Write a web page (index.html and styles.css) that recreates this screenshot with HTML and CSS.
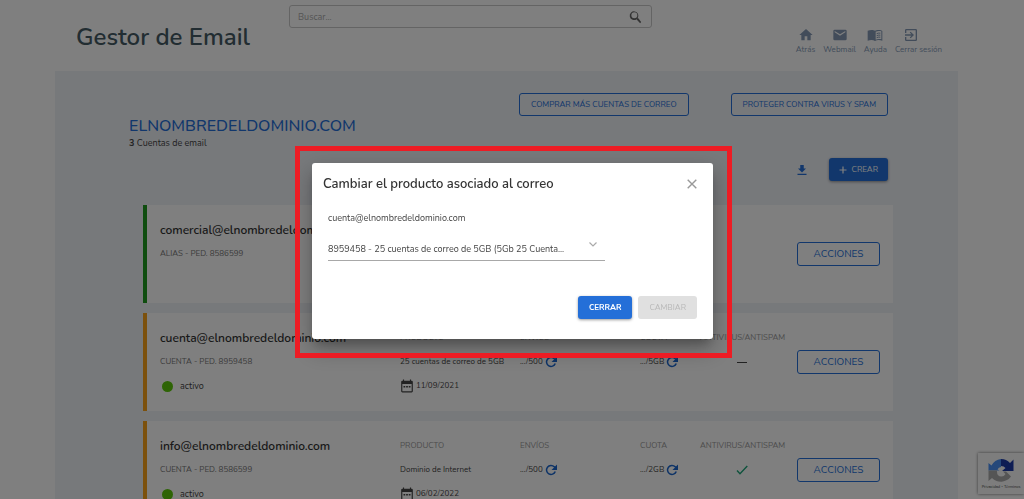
FILE: index.html
```
<!DOCTYPE html>
<html lang="es">
<head>
<meta charset="utf-8">
<meta name="viewport" content="width=device-width, initial-scale=1">
<title>Gestor de Email</title>
<link rel="stylesheet" href="styles.css">
</head>
<body>
<svg class="sprite" aria-hidden="true">
  <symbol id="reload" viewBox="0 0 24 24"><path d="M20.500 15A9 9 0 1 1 18.500 5.500L20 7" fill="none" stroke="currentColor" stroke-width="3"/><path d="M24 1v11H13z" fill="currentColor"/></symbol>
  <symbol id="calendar" viewBox="0 0 24 24"><path fill="currentColor" d="M20 3h-1V1h-2v2H7V1H5v2H4a2 2 0 0 0-2 2v16a2 2 0 0 0 2 2h16a2 2 0 0 0 2-2V5a2 2 0 0 0-2-2zm0 18H4V8.500h16zM6 12h3v2.500H6zm4.500 0h3v2.500h-3zm4.500 0h3v2.500h-3z"/></symbol>
</svg>
<div class="page">
  <header class="header">
    <h1 class="brand">Gestor de Email</h1>
    <form class="search" role="search">
      <input class="search-input" type="search" placeholder="Buscar..." aria-label="Buscar">
      <button class="search-button" type="button" aria-label="Buscar">
        <svg class="icon-16" viewBox="0 0 24 24" fill="currentColor"><path d="M15.500 14h-.79l-.28-.27A6.500 6.500 0 1 0 13 15.230l.27.28v.79l5 4.990L19.760 19.500zM9.500 14a4.500 4.500 0 1 1 0-9 4.500 4.500 0 0 1 0 9z"/></svg>
      </button>
    </form>
    <nav class="nav">
      <a class="nav-link" href="#"><svg class="icon-16" viewBox="0 0 24 24" fill="currentColor"><path d="M10 20v-6h4v6h5v-8h3L12 3 2 12h3v8z"/></svg>Atrás</a>
      <a class="nav-link" href="#"><svg class="icon-16" viewBox="0 0 24 24" fill="currentColor"><path d="M20 4H4a2 2 0 0 0-2 2v12a2 2 0 0 0 2 2h16a2 2 0 0 0 2-2V6a2 2 0 0 0-2-2zm0 4-8 5-8-5V6l8 5 8-5z"/></svg>Webmail</a>
      <a class="nav-link" href="#"><svg class="icon-16" viewBox="0 0 24 24"><path fill="currentColor" d="M21 5c-3-1-7-.8-9 .8C10 4.200 5.500 4 1 5.500v15C5 19 9.500 19 12 21c2.500-1.800 7-2 11-.5V6zM21.500 18.500c-3-.8-6.500-.5-8.500.6V7.200c2.500-1.400 5.500-1.500 8.500-.7z"/><path d="M14.500 10q3-1.300 5.500-.7M14.500 13q3-1.300 5.500-.7M14.500 16q3-1.300 5.500-.7" fill="none" stroke="currentColor" stroke-width="1.500"/></svg>Ayuda</a>
      <a class="nav-link nav-exit" href="#"><svg class="icon-16" viewBox="0 0 24 24" fill="currentColor"><path d="M10.090 15.590 11.500 17l5-5-5-5-1.410 1.410L12.670 11H3v2h9.670zM19 3H5a2 2 0 0 0-2 2v4h2V5h14v14H5v-4H3v4a2 2 0 0 0 2 2h14a2 2 0 0 0 2-2V5a2 2 0 0 0-2-2z"/></svg>Cerrar sesión</a>
    </nav>
  </header>

  <main class="panel">
    <div class="promo">
      <button class="btn btn-outline" type="button">COMPRAR MÁS CUENTAS DE CORREO</button>
      <button class="btn btn-outline" type="button">PROTEGER CONTRA VIRUS Y SPAM</button>
    </div>
    <div class="domain">
      <h2 class="domain-name">ELNOMBREDELDOMINIO.COM</h2>
      <p class="domain-count"><b>3</b> Cuentas de email</p>
    </div>
    <div class="tools">
      <button class="download" type="button" aria-label="Descargar"><svg class="icon-12" viewBox="0 0 24 24" fill="currentColor"><path d="M20 9h-4.500V2h-7v7H4l8 8zM3 19.500v2.500h18v-2.500z"/></svg></button>
      <button class="btn btn-primary btn-create" type="button"><svg class="icon-8" viewBox="0 0 8 8"><path d="M4 .5v7M.5 4h7" stroke="currentColor" stroke-width="1.200"/></svg>CREAR</button>
    </div>

    <div class="cards">
      <article class="card card-alias">
        <h3 class="card-title">comercial@elnombredeldominio.com</h3>
        <p class="card-order">ALIAS - PED. 8586599</p>
        <button class="btn btn-outline btn-actions" type="button">ACCIONES</button>
      </article>
      <article class="card">
        <h3 class="card-title">cuenta@elnombredeldominio.com</h3>
        <p class="card-order">CUENTA - PED. 8959458</p>
        <p class="card-status"><span class="dot"></span>activo</p>
        <span class="label product">PRODUCTO</span>
        <span class="label sends">ENVÍOS</span>
        <span class="label quota">CUOTA</span>
        <span class="label shield">ANTIVIRUS/ANTISPAM</span>
        <span class="value product">25 cuentas de correo de 5GB</span>
        <span class="value sends">.../500 <svg class="icon-12 blue"><use href="#reload"/></svg></span>
        <span class="value quota">.../5GB <svg class="icon-12 blue"><use href="#reload"/></svg></span>
        <span class="value shield"><svg class="icon-12" viewBox="0 0 12 12"><path d="M1 6.500h10" stroke="currentColor"/></svg></span>
        <span class="value date"><svg class="icon-14"><use href="#calendar"/></svg>11/09/2021</span>
        <button class="btn btn-outline btn-actions" type="button">ACCIONES</button>
      </article>
      <article class="card">
        <h3 class="card-title">info@elnombredeldominio.com</h3>
        <p class="card-order">CUENTA - PED. 8586599</p>
        <p class="card-status"><span class="dot"></span>activo</p>
        <span class="label product">PRODUCTO</span>
        <span class="label sends">ENVÍOS</span>
        <span class="label quota">CUOTA</span>
        <span class="label shield">ANTIVIRUS/ANTISPAM</span>
        <span class="value product">Dominio de Internet</span>
        <span class="value sends">.../500 <svg class="icon-12 blue"><use href="#reload"/></svg></span>
        <span class="value quota">.../2GB <svg class="icon-12 blue"><use href="#reload"/></svg></span>
        <span class="value shield"><svg class="icon-12 green" viewBox="0 0 12 12"><path d="M1 6.500 4 9.800 11.300 2" fill="none" stroke="currentColor" stroke-width="1.400"/></svg></span>
        <span class="value date"><svg class="icon-14"><use href="#calendar"/></svg>06/02/2022</span>
        <button class="btn btn-outline btn-actions" type="button">ACCIONES</button>
      </article>
    </div>
  </main>
</div>

<aside class="captcha">
  <svg class="captcha-logo" viewBox="0 0 26 26">
    <path fill="#4a90f4" d="M.5 12.500V5l3 2.500A12 12 0 0 1 13 1v8q-2.500 0-3.500 2.500l2 1z"/>
    <path fill="#1c3aa9" d="M13 1a12 12 0 0 1 9 4l3.500-3.500V13H14l3.500-3Q16 8 13 8z"/>
    <path fill="#ababab" d="M.5 12.500H9q-.5 6 4.500 6 2.500 0 4-2.500L15 13.500h3l5 5A12.500 12.500 0 0 1 4 20L.5 23z"/>
  </svg>
  <span class="captcha-text">Privacidad - Términos</span>
</aside>

<div class="overlay">
  <div class="highlight">
    <section class="dialog" role="dialog" aria-modal="true" aria-labelledby="dialog-title">
      <div class="dialog-head">
        <h2 class="dialog-title" id="dialog-title">Cambiar el producto asociado al correo</h2>
        <button class="dialog-close" type="button" aria-label="Cerrar diálogo"><svg class="icon-10" viewBox="0 0 10 10"><path d="M.7.7l8.600 8.600M9.300.7.7 9.300" stroke="currentColor" stroke-width="1.400"/></svg></button>
      </div>
      <div class="dialog-body">
        <label class="dialog-account" for="product">cuenta@elnombredeldominio.com</label>
        <div class="field">
          <select class="field-select" id="product">
            <option>8959458 - 25 cuentas de correo de 5GB (5Gb 25 Cuenta...</option>
          </select>
          <svg class="field-arrow" viewBox="0 0 8 5"><path d="M.5.500 4 4 7.500.5" fill="none" stroke="currentColor" stroke-width="1.200"/></svg>
        </div>
      </div>
      <div class="dialog-actions">
        <button class="btn btn-primary btn-strong" type="button">CERRAR</button>
        <button class="btn btn-disabled" type="button" disabled>CAMBIAR</button>
      </div>
    </section>
  </div>
</div>
</body>
</html>
```

FILE: styles.css
```
* { box-sizing: border-box; }

body {
  margin: 0;
  height: 100vh;
  overflow: hidden;
  background: #fff;
  color: #444;
  font: 9px/12px Nunito, Roboto, sans-serif;
}

h1, h2, h3, p { margin: 0; }
button, input, select { font: inherit; color: inherit; }
button { cursor: pointer; }
svg { display: block; flex: none; }

.sprite { display: none; }
.icon-8 { width: 8px; height: 8px; }
.icon-10 { width: 10px; height: 10px; }
.icon-12 { width: 12px; height: 12px; }
.icon-14 { width: 14px; height: 14px; }
.icon-16 { width: 16px; height: 16px; }
.blue { color: #1a66cf; }
.green { color: #1fa67a; }

.page { padding: 0 66px 0 55px; }

/* Header */
.header {
  display: grid;
  grid-template-columns: 213fr 363fr 290fr;
  height: 71px;
  padding: 5px 16px 0 21px;
}
.brand {
  padding-top: 16px;
  color: #455a64;
  font-size: 24px;
  line-height: 32px;
  font-weight: 600;
  white-space: nowrap;
}
.search {
  display: flex;
  align-items: center;
  height: 23px;
  border: 1px solid #c9c9c9;
  border-radius: 3px;
}
.search-input {
  flex: 1;
  min-width: 0;
  border: 0;
  padding: 0 8px;
  background: none;
  outline: 0;
}
.search-input::placeholder { color: #aaa; }
.search-button {
  padding: 0 7px;
  border: 0;
  background: none;
  color: #666;
}
.nav {
  display: flex;
  justify-content: flex-end;
  gap: 8px;
  padding-top: 22px;
}
.nav-link {
  display: flex;
  flex-direction: column;
  align-items: center;
  color: #8499b5;
  font-size: 8px;
  line-height: 14px;
  text-decoration: none;
  white-space: nowrap;
}
.nav-exit svg { align-self: flex-start; margin-left: 8px; }

/* Buttons */
.btn {
  display: inline-flex;
  align-items: center;
  justify-content: center;
  height: 23px;
  padding: 0 10px;
  border: 1px solid transparent;
  border-radius: 3px;
  font-size: 8px;
  white-space: nowrap;
}
.btn-outline { background: none; border-color: #246fd8; color: #246fd8; }
.btn-primary {
  background: #246fd8;
  color: #fff;
  box-shadow: 0 1px 3px rgba(0, 0, 0, .4);
}
.btn-disabled { background: #e0e0e0; color: #b8b8b8; }
.btn-strong { font-weight: 700; }

/* Main panel */
.panel {
  min-height: calc(100vh - 71px);
  padding: 22px 65px 0 74px;
  background: #eff2f7;
}
.promo { display: flex; justify-content: flex-end; gap: 42px; padding-right: 5px; }
.promo .btn { padding: 0 11px; }
.domain-name {
  color: #246fd8;
  font-size: 16px;
  line-height: 20px;
  font-weight: 500;
}
.domain-count { line-height: 14px; }
.tools {
  display: flex;
  justify-content: flex-end;
  align-items: center;
  gap: 21px;
  padding: 8px 5px 24px 0;
}
.download { padding: 0; border: 0; background: none; color: #246fd8; }
.btn-create { gap: 5px; padding: 0 9px; }

/* Account cards */
.cards { display: flex; flex-direction: column; gap: 10px; padding-left: 14px; }
.card {
  display: grid;
  grid-template-columns: 240fr 120fr 120fr 60fr 97fr 83fr;
  grid-template-rows: repeat(3, 24px);
  align-items: center;
  padding: 13px;
  border-left: 4px solid #f9a31a;
  background: #fff;
  white-space: nowrap;
}
.card > * { min-width: 0; }
.card-alias { border-color: #1f9a1f; }
.card-title { grid-area: 1 / 1; color: #333; font-size: 12px; font-weight: 600; }
.card-order { grid-area: 2 / 1; color: #777; font-size: 8px; }
.card-status { grid-area: 3 / 1; display: flex; align-items: center; gap: 7px; padding-left: 2px; }
.dot { width: 11px; height: 11px; border-radius: 50%; background: #5cc80a; }
.label { grid-row: 1; color: #999; font-size: 8px; }
.value { grid-row: 2; display: flex; align-items: center; gap: 2px; font-size: 8px; }
.product { grid-column: 2; }
.sends { grid-column: 3; }
.quota { grid-column: 4; }
.shield { grid-column: 5; }
.value.shield { padding-left: 36px; }
.value.date { grid-area: 3 / 2; }
.btn-actions { grid-area: 2 / 6; height: 24px; font-size: 10px; }

/* Captcha badge */
.captcha {
  position: absolute;
  right: 0;
  bottom: 5px;
  display: flex;
  flex-direction: column;
  align-items: center;
  width: 46px;
  padding: 5px 0 4px;
  background: #fafafa;
  box-shadow: 0 0 3px #777;
}
.captcha-logo { width: 26px; height: 26px; }
.captcha-text { font-size: 4px; line-height: 6px; }

/* Dialog */
.overlay {
  position: fixed;
  inset: 0;
  display: grid;
  place-content: center;
  padding: 5px 0 0 3px;
  background: rgba(0, 0, 0, .5);
}
.highlight {
  position: relative;
  padding: 17px 19px 19px 17px;
}
.highlight::after {
  content: "";
  position: absolute;
  inset: 0;
  border: 5px solid #ed1c24;
  pointer-events: none;
}
.dialog {
  width: 401px;
  max-width: 90vw;
  padding: 11px 16px 20px 11px;
  border-radius: 3px;
  background: #fff;
  box-shadow: 0 7px 10px -4px rgba(0, 0, 0, .25), 0 10px 22px 2px rgba(0, 0, 0, .25);
}
.dialog-head { display: flex; justify-content: space-between; align-items: center; }
.dialog-title { color: #333; font-size: 13px; line-height: 20px; font-weight: 600; }
.dialog-close { padding: 0; border: 0; background: none; color: #999; }
.dialog-body { padding: 17px 0 0 5px; }
.dialog-account { display: block; line-height: 14px; }
.field { display: flex; width: 277px; margin-top: 12px; border-bottom: 1px solid #a8a8a8; }
.field-select {
  flex: 1;
  min-width: 0;
  height: 23px;
  padding: 0;
  border: 0;
  appearance: none;
  background: none;
  outline: 0;
}
.field-arrow { width: 8px; height: 5px; margin: 5px 8px 0 0; color: #aaa; }
.dialog-actions { display: flex; justify-content: flex-end; gap: 6px; padding-top: 35px; }
```
